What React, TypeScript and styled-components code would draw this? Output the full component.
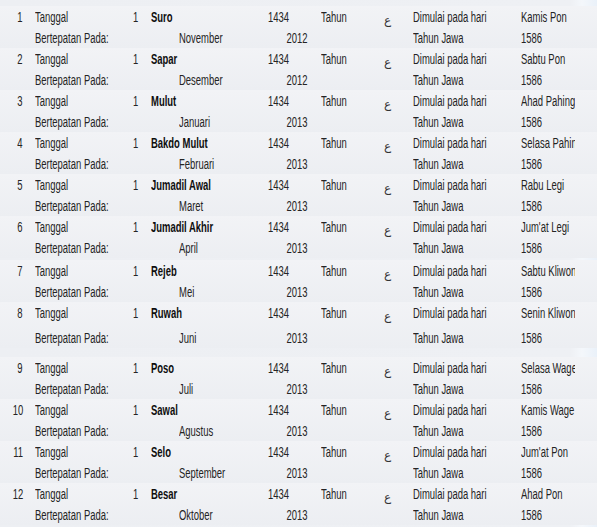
import styled, { createGlobalStyle } from 'styled-components';

const GlobalStyle = createGlobalStyle`
  html, body {
    margin: 0;
    padding: 0;
    background: #eef0f4;
  }
`;

const Page = styled.div`
  width: 597px;
  height: 527px;
  overflow: hidden;
  padding-top: 6px;
  box-sizing: border-box;
  background: linear-gradient(
    to right,
    #edeff3 0,
    #eef0f4 570px,
    #f4f7fb 582px,
    #eaf1f9 597px
  );
  font-family: 'Liberation Sans', Arial, sans-serif;
  font-size: 15.5px;
  color: #242424;
`;

const Record = styled.div<{ $extraTop: number; $shift: number }>`
  display: grid;
  grid-template-columns: 35px 98px 18px 28px 89px 53px 63px 29px 108px 54px;
  grid-template-rows: 21px ${(p) => 21 + p.$shift}px;
  margin-top: ${(p) => p.$extraTop}px;
  background: linear-gradient(to bottom, #f2f3f6 0, #eceef2 100%);
`;

const Cell = styled.div<{ $col: string; $row: number; $align?: string; $bold?: boolean }>`
  grid-column: ${(p) => p.$col};
  grid-row: ${(p) => p.$row};
  line-height: 21px;
  white-space: nowrap;
  overflow: hidden;
  text-align: ${(p) => p.$align || 'left'};
  font-weight: ${(p) => (p.$bold ? 700 : 400)};
  color: ${(p) => (p.$bold ? '#0e0e0e' : 'inherit')};
`;

/* the reference face is a tall, narrow display font: squeeze a regular sans */
const Narrow = styled.span<{ $origin?: string }>`
  display: inline-block;
  transform: scaleX(0.61);
  transform-origin: ${(p) => p.$origin || 'left'} center;
`;

const Num = styled(Cell)`
  padding-right: 12px;
`;

const GregYear = styled(Cell)`
  padding-right: 14px;
`;

const Glyph = styled.div`
  grid-column: 8;
  grid-row: 1;
  padding-top: 4px;
  line-height: 21px;
  font-family: 'DejaVu Sans', sans-serif;
  font-size: 12px;
  color: #333;
`;

const SecondLine = styled.div`
  grid-column: 1 / -1;
  grid-row: 2;
  align-self: end;
  height: 21px;
  display: grid;
  grid-template-columns: subgrid;
`;

type Row = {
  n: number;
  hm: string;
  gm: string;
  gy: string;
  day: string;
  extraTop?: number;
  shift?: number;
};

const rows: Row[] = [
  { n: 1, hm: 'Suro', gm: 'November', gy: '2012', day: 'Kamis Pon' },
  { n: 2, hm: 'Sapar', gm: 'Desember', gy: '2012', day: 'Sabtu Pon' },
  { n: 3, hm: 'Mulut', gm: 'Januari', gy: '2013', day: 'Ahad Pahing' },
  { n: 4, hm: 'Bakdo Mulut', gm: 'Februari', gy: '2013', day: 'Selasa Pahing' },
  { n: 5, hm: 'Jumadil Awal', gm: 'Maret', gy: '2013', day: 'Rabu Legi' },
  { n: 6, hm: 'Jumadil Akhir', gm: 'April', gy: '2013', day: "Jum'at Legi" },
  { n: 7, hm: 'Rejeb', gm: 'Mei', gy: '2013', day: 'Sabtu Kliwon', extraTop: 2 },
  { n: 8, hm: 'Ruwah', gm: 'Juni', gy: '2013', day: 'Senin Kliwon', shift: 4 },
  { n: 9, hm: 'Poso', gm: 'Juli', gy: '2013', day: 'Selasa Wage', extraTop: 9 },
  { n: 10, hm: 'Sawal', gm: 'Agustus', gy: '2013', day: 'Kamis Wage' },
  { n: 11, hm: 'Selo', gm: 'September', gy: '2013', day: "Jum'at Pon" },
  { n: 12, hm: 'Besar', gm: 'Oktober', gy: '2013', day: 'Ahad Pon' },
];

const App = () => (
  <>
    <GlobalStyle />
    <Page>
      {rows.map((r) => (
        <Record key={r.n} $extraTop={r.extraTop || 0} $shift={r.shift || 0}>
          <Num $col="1" $row={1} $align="right"><Narrow $origin="right">{r.n}</Narrow></Num>
          <Cell $col="2" $row={1}><Narrow>Tanggal</Narrow></Cell>
          <Cell $col="3" $row={1}><Narrow>1</Narrow></Cell>
          <Cell $col="4 / 6" $row={1} $bold><Narrow>{r.hm}</Narrow></Cell>
          <Cell $col="6" $row={1}><Narrow>1434</Narrow></Cell>
          <Cell $col="7" $row={1}><Narrow>Tahun</Narrow></Cell>
          <Glyph>ع</Glyph>
          <Cell $col="9" $row={1}><Narrow>Dimulai pada hari</Narrow></Cell>
          <Cell $col="10" $row={1}><Narrow>{r.day}</Narrow></Cell>
          <SecondLine>
            <Cell $col="2 / 5" $row={1}><Narrow>Bertepatan Pada:</Narrow></Cell>
            <Cell $col="5" $row={1}><Narrow>{r.gm}</Narrow></Cell>
            <GregYear $col="6" $row={1} $align="right"><Narrow $origin="right">{r.gy}</Narrow></GregYear>
            <Cell $col="9" $row={1}><Narrow>Tahun Jawa</Narrow></Cell>
            <Cell $col="10" $row={1}><Narrow>1586</Narrow></Cell>
          </SecondLine>
        </Record>
      ))}
    </Page>
  </>
);

export default App;
